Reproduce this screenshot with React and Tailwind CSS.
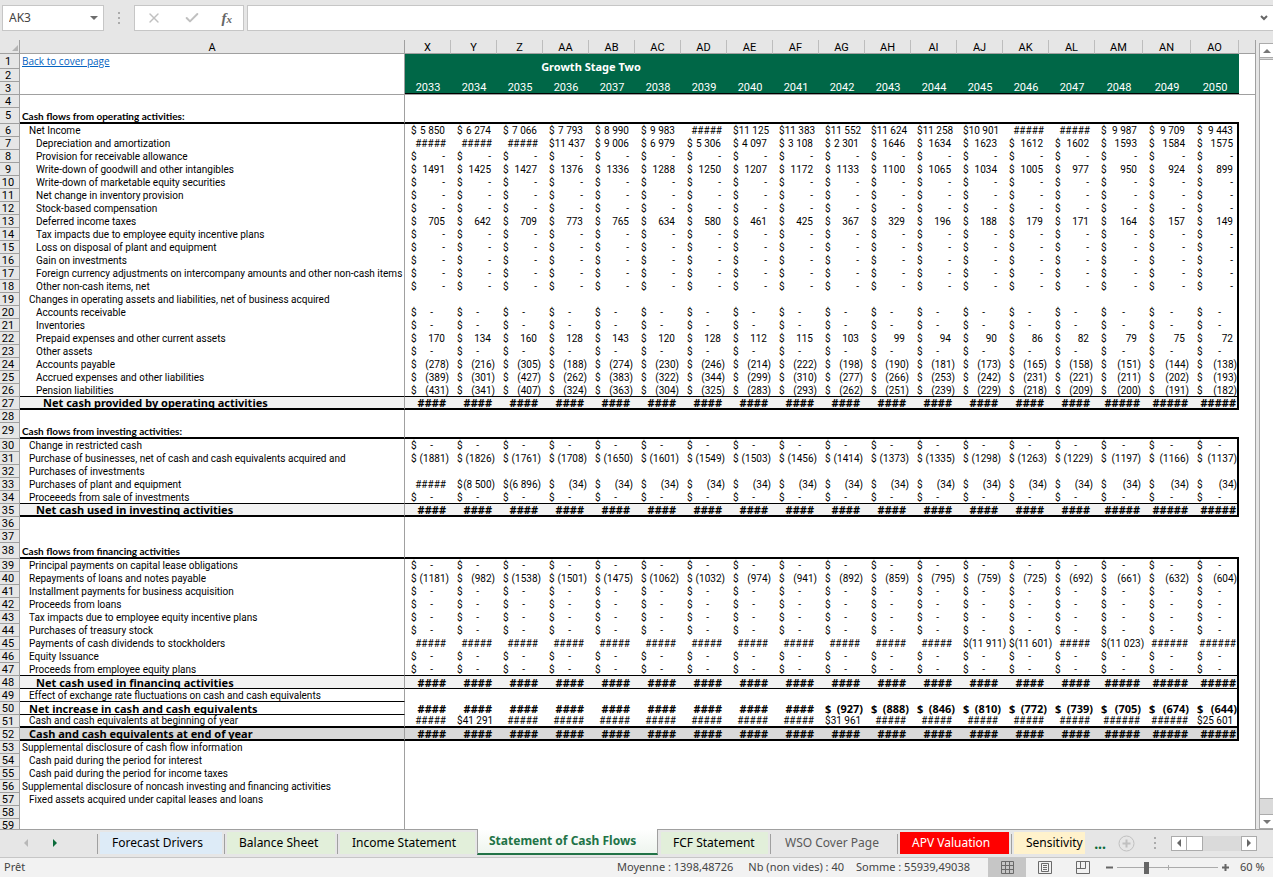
import React from 'react';
import { Check, X } from 'lucide-react';
import { clsx } from 'clsx';

const COLUMNS = ['X', 'Y', 'Z', 'AA', 'AB', 'AC', 'AD', 'AE', 'AF', 'AG', 'AH', 'AI', 'AJ', 'AK', 'AL', 'AM', 'AN', 'AO'];
const FIRST_YEAR = 2033;
const FIRST_WIDE = COLUMNS.indexOf('AM');

// Cell shorthands: '-' is a zero at the right, '~' a zero set further left, '#' a number too wide for its column
const ZERO = Array(18).fill('-');
const ZERO_LEFT = Array(18).fill('~');
const HASHES = Array(18).fill('#');
const list = (s) => s.split(',');

const ROWS = [
    { n: 4 },
    { n: 5, kind: 'section', label: 'Cash flows from operating activities:' },
    { n: 6, level: 1, label: 'Net Income', framed: true, cells: list('5 850,6 274,7 066,7 793,8 990,9 983,#,11 125,11 383,11 552,11 624,11 258,10 901,#,#,9 987,9 709,9 443') },
    { n: 7, level: 2, label: 'Depreciation and amortization', framed: true, cells: list('#,#,#,11 437,9 006,6 979,5 306,4 097,3 108,2 301,1646,1634,1623,1612,1602,1593,1584,1575') },
    { n: 8, level: 2, label: 'Provision for receivable allowance', framed: true, cells: ZERO },
    { n: 9, level: 2, label: 'Write-down of goodwill and other intangibles', framed: true, cells: list('1491,1425,1427,1376,1336,1288,1250,1207,1172,1133,1100,1065,1034,1005,977,950,924,899') },
    { n: 10, level: 2, label: 'Write-down of marketable equity securities', framed: true, cells: ZERO },
    { n: 11, level: 2, label: 'Net change in inventory provision', framed: true, cells: ZERO },
    { n: 12, level: 2, label: 'Stock-based compensation', framed: true, cells: ZERO },
    { n: 13, level: 2, label: 'Deferred income taxes', framed: true, cells: list('705,642,709,773,765,634,580,461,425,367,329,196,188,179,171,164,157,149') },
    { n: 14, level: 2, label: 'Tax impacts due to employee equity incentive plans', framed: true, cells: ZERO },
    { n: 15, level: 2, label: 'Loss on disposal of plant and equipment', framed: true, cells: ZERO },
    { n: 16, level: 2, label: 'Gain on investments', framed: true, cells: ZERO },
    { n: 17, level: 2, label: 'Foreign currency adjustments on intercompany amounts and other non-cash items', framed: true, cells: ZERO },
    { n: 18, level: 2, label: 'Other non-cash items, net', framed: true, cells: ZERO },
    { n: 19, level: 1, label: 'Changes in operating assets and liabilities, net of business acquired', framed: true },
    { n: 20, level: 2, label: 'Accounts receivable', framed: true, cells: ZERO_LEFT },
    { n: 21, level: 2, label: 'Inventories', framed: true, cells: ZERO_LEFT },
    { n: 22, level: 2, label: 'Prepaid expenses and other current assets', framed: true, cells: list('170,134,160,128,143,120,128,112,115,103,99,94,90,86,82,79,75,72') },
    { n: 23, level: 2, label: 'Other assets', framed: true, cells: ZERO_LEFT },
    { n: 24, level: 2, label: 'Accounts payable', framed: true, cells: list('(278),(216),(305),(188),(274),(230),(246),(214),(222),(198),(190),(181),(173),(165),(158),(151),(144),(138)') },
    { n: 25, level: 2, label: 'Accrued expenses and other liabilities', framed: true, cells: list('(389),(301),(427),(262),(383),(322),(344),(299),(310),(277),(266),(253),(242),(231),(221),(211),(202),(193)') },
    { n: 26, level: 2, label: 'Pension liabilities', framed: true, line: 'thin', cells: list('(431),(341),(407),(324),(363),(304),(325),(283),(293),(262),(251),(239),(229),(218),(209),(200),(191),(182)') },
    { n: 27, level: 3, kind: 'total', label: 'Net cash provided by operating activities', framed: true, line: 'thick', cells: HASHES },
    { n: 28 },
    { n: 29, kind: 'section', label: 'Cash flows from investing activities:' },
    { n: 30, level: 1, label: 'Change in restricted cash', framed: true, cells: ZERO_LEFT },
    { n: 31, level: 1, label: 'Purchase of businesses, net of cash and cash equivalents acquired and', framed: true, cells: list('(1881),(1826),(1761),(1708),(1650),(1601),(1549),(1503),(1456),(1414),(1373),(1335),(1298),(1263),(1229),(1197),(1166),(1137)') },
    { n: 32, level: 1, label: 'Purchases of investments', framed: true },
    { n: 33, level: 1, label: 'Purchases of plant and equipment', framed: true, cells: ['#', '(8 500)', '(6 896)', ...Array(15).fill('(34)')] },
    { n: 34, level: 1, label: 'Proceeeds from sale of investments', framed: true, line: 'thin', cells: ZERO_LEFT },
    { n: 35, level: 2, kind: 'total', label: 'Net cash used in investing activities', framed: true, line: 'thick', cells: HASHES },
    { n: 36 },
    { n: 37 },
    { n: 38, kind: 'section', label: 'Cash flows from financing activities' },
    { n: 39, level: 1, label: 'Principal payments on capital lease obligations', framed: true, cells: ZERO_LEFT },
    { n: 40, level: 1, label: 'Repayments of loans and notes payable', framed: true, cells: list('(1181),(982),(1538),(1501),(1475),(1062),(1032),(974),(941),(892),(859),(795),(759),(725),(692),(661),(632),(604)') },
    { n: 41, level: 1, label: 'Installment payments for business acquisition', framed: true, cells: ZERO_LEFT },
    { n: 42, level: 1, label: 'Proceeds from loans', framed: true, cells: ZERO_LEFT },
    { n: 43, level: 1, label: 'Tax impacts due to employee equity incentive plans', framed: true, cells: ZERO_LEFT },
    { n: 44, level: 1, label: 'Purchases of treasury stock', framed: true, cells: ZERO_LEFT },
    { n: 45, level: 1, label: 'Payments of cash dividends to stockholders', framed: true, cells: list('#,#,#,#,#,#,#,#,#,#,#,#,(11 911),(11 601),#,(11 023),#,#') },
    { n: 46, level: 1, label: 'Equity Issuance', framed: true, cells: ZERO_LEFT },
    { n: 47, level: 1, label: 'Proceeds from employee equity plans', framed: true, line: 'thin', cells: ZERO_LEFT },
    { n: 48, level: 2, kind: 'total', label: 'Net cash used in financing activities', framed: true, line: 'thin', cells: HASHES },
    { n: 49, level: 1, label: 'Effect of exchange rate fluctuations on cash and cash equivalents', framed: true, labelLine: true },
    { n: 50, level: 1, kind: 'bold', label: 'Net increase in cash and cash equivalents', framed: true, labelLine: true, cells: list('#,#,#,#,#,#,#,#,#,(927),(888),(846),(810),(772),(739),(705),(674),(644)') },
    { n: 51, level: 1, label: 'Cash and cash equivalents at beginning of year', framed: true, line: 'thick', cells: list('#,41 291,#,#,#,#,#,#,#,31 961,#,#,#,#,#,#,#,25 601') },
    { n: 52, level: 1, kind: 'grand', label: 'Cash and cash equivalents at end of year', framed: true, line: 'thick', cells: HASHES },
    { n: 53, level: 0, label: 'Supplemental disclosure of cash flow information' },
    { n: 54, level: 1, label: 'Cash paid during the period for interest' },
    { n: 55, level: 1, label: 'Cash paid during the period for income taxes' },
    { n: 56, level: 0, label: 'Supplemental disclosure of noncash investing and financing activities' },
    { n: 57, level: 1, label: 'Fixed assets acquired under capital leases and loans' },
    { n: 58 },
    { n: 59 },
];

const INDENT = ['pl-[2px]', 'pl-[9px]', 'pl-[16px]', 'pl-[23px]'];
const LINES = { thin: 'border-b border-b-black', thick: 'border-b-2 border-b-black' };
const BOLD = "font-['Noto_Sans',sans-serif] font-bold text-[11px]";

const TABS = [
    { name: 'Forecast Drivers', width: 'w-[127px]', fill: 'bg-[#ddebf7]' },
    { name: 'Balance Sheet', width: 'w-[113px]', fill: 'bg-[#e2efda]' },
    { name: 'Income Statement', width: 'w-[140px]', fill: 'bg-[#e2efda]' },
    { name: 'Statement of Cash Flows', width: 'w-[181px]', active: true },
    { name: 'FCF Statement', width: 'w-[112px]', fill: 'bg-[#e2efda]', noDivider: true },
    { name: 'WSO Cover Page', width: 'w-[127px]', text: 'text-[#595959]' },
    { name: 'APV Valuation', width: 'w-[114px]', fill: 'bg-[#ff0000]', text: 'text-white' },
    { name: 'Sensitivity', width: 'w-[76px]', fill: 'bg-[#fff2cc]' },
];

function Triangle({ points, className }) {
    return (
        <svg width="8" height="8" viewBox="0 0 8 8" className={className} aria-hidden="true">
            <polygon points={points} fill="currentColor" />
        </svg>
    );
}

function Dots() {
    return (
        <span className="flex flex-col gap-[3px]" aria-hidden="true">
            <i className="size-[2px] bg-[#ababab]" />
            <i className="size-[2px] bg-[#ababab]" />
            <i className="size-[2px] bg-[#ababab]" />
        </span>
    );
}

function FormulaBar() {
    return (
        <div className="flex h-10 shrink-0 items-start bg-[#e6e6e6] pt-[5px] pl-[2px]">
            <div className="flex h-[26px] w-[102px] items-center border border-[#c6c6c6] bg-white">
                <input
                    aria-label="Name box"
                    defaultValue="AK3"
                    className="w-20 bg-transparent pl-[6px] text-[12px] text-[#444] outline-none"
                />
                <button className="ml-auto pr-[5px] text-[#6d6d6d]" title="Name list">
                    <Triangle points="0,2 8,2 4,6" />
                </button>
            </div>
            <div className="flex h-[26px] w-[30px] items-center justify-center">
                <Dots />
            </div>
            <div className="flex h-[26px] w-[110px] items-center justify-around border border-[#c6c6c6] bg-white text-[#c0c0c0]">
                <button title="Cancel"><X size={16} strokeWidth={2} /></button>
                <button title="Enter"><Check size={16} strokeWidth={3} /></button>
                <button title="Insert function" className="font-['Liberation_Serif',serif] text-[15px] leading-none font-bold text-[#666] italic">
                    f<span className="text-[11px]">x</span>
                </button>
            </div>
            <div className="ml-[3px] flex h-[26px] flex-1 items-center border border-r-0 border-[#c6c6c6] bg-white">
                <input aria-label="Formula" className="min-w-0 flex-1 bg-transparent px-2 text-[12px] outline-none" />
                <button title="Expand formula bar" className="px-[5px] text-[#666]">
                    <svg width="8" height="6" viewBox="0 0 8 6" fill="none" stroke="currentColor" strokeWidth="2">
                        <path d="M1 1l3 3 3-3" />
                    </svg>
                </button>
            </div>
        </div>
    );
}

function RowNumber({ n }) {
    return (
        <th scope="row" className="border-r border-b border-[#a0a0a0] bg-[#e6e6e6] pr-[3px] text-center text-[11px] font-normal">
            {n}
        </th>
    );
}

function Amount({ value, bold, wide }) {
    if (value === '#') {
        const count = (bold ? 4 : 5) + (wide ? 1 : 0);
        return <div className={clsx('text-right', wide ? 'pr-[3px]' : 'pr-[5px]')}>{'#'.repeat(count)}</div>;
    }
    return (
        <div className={clsx('flex justify-between pl-[6px]', value.startsWith('(') ? 'pr-[2px]' : 'pr-[6px]')}>
            <span>$</span>
            <span className={clsx(value === '~' && 'pr-[12px]')}>{value === '~' ? '-' : value}</span>
        </div>
    );
}

function SheetRow({ row }) {
    const section = row.kind === 'section';
    const bold = row.kind === 'total' || row.kind === 'grand' || row.kind === 'bold';
    const line = section ? LINES.thick : LINES[row.line];
    const fill = row.kind === 'total' ? 'bg-[#f2f2f2]' : row.kind === 'grand' ? 'bg-[#d9d9d9]' : 'bg-white';

    return (
        <tr className={section ? 'h-[16px]' : 'h-[13px]'}>
            <RowNumber n={row.n} />
            <td
                className={clsx(
                    'overflow-hidden border-r border-r-[#a0a0a0] whitespace-nowrap',
                    INDENT[row.level ?? 0],
                    fill,
                    line,
                    row.labelLine && LINES.thin,
                    section && "align-bottom font-['Lato',sans-serif] font-bold",
                    bold && BOLD,
                )}
            >
                {row.label}
            </td>
            {COLUMNS.map((col, i) => (
                <td
                    key={col}
                    className={clsx(
                        'whitespace-nowrap',
                        fill,
                        line,
                        bold && BOLD,
                        row.framed && i === COLUMNS.length - 1 && 'border-r-2 border-r-black [&>div]:-mr-[2px]',
                    )}
                >
                    {row.cells && <Amount value={row.cells[i]} bold={bold} wide={i >= FIRST_WIDE} />}
                </td>
            ))}
            <td className="bg-white" />
        </tr>
    );
}

function Sheet() {
    return (
        <div className="min-w-0 flex-1 overflow-hidden bg-white">
            <table className="w-full table-fixed border-separate border-spacing-0 font-['Roboto',sans-serif] text-[10px] leading-[11px] text-black">
                <colgroup>
                    <col className="w-[20px]" />
                    <col className="w-[385px]" />
                    {COLUMNS.map((col, i) => (
                        <col key={col} className={i >= FIRST_WIDE ? 'w-[48px]' : 'w-[46px]'} />
                    ))}
                    <col />
                </colgroup>
                <thead>
                    <tr className="h-[14px] bg-[#e6e6e6] text-[11px] [&>th]:pt-[2px]">
                        <th className="border-r border-b border-[#a0a0a0] text-[#b4b4b4]">
                            <Triangle points="8,0 8,8 0,8" className="ml-auto h-[6px]" />
                        </th>
                        <th scope="col" className="border-r border-b border-[#a0a0a0] font-normal">A</th>
                        {COLUMNS.map((col) => (
                            <th key={col} scope="col" className="border-r border-b border-[#a0a0a0] border-r-[#bdbdbd] font-normal">{col}</th>
                        ))}
                        <th className="border-b border-[#a0a0a0]" />
                    </tr>
                </thead>
                <tbody>
                    <tr className="h-[15px]">
                        <RowNumber n={1} />
                        <td className="border-r border-[#a0a0a0] pl-[2px]">
                            <a href="#cover" className="font-['Open_Sans',sans-serif] text-[#0563c1] underline">Back to cover page</a>
                        </td>
                        <th colSpan={8} rowSpan={2} className={clsx('bg-[#006747] pb-[3px] pl-[4px] text-center text-white', BOLD)}>
                            Growth Stage Two
                        </th>
                        <td colSpan={10} rowSpan={2} className="bg-[#006747]" />
                        <td />
                    </tr>
                    <tr className="h-[13px]">
                        <RowNumber n={2} />
                        <td className="border-r border-[#a0a0a0]" />
                        <td />
                    </tr>
                    <tr className="h-[13px]">
                        <RowNumber n={3} />
                        <td className="border-r border-b border-[#a0a0a0]" />
                        {COLUMNS.map((col, i) => (
                            <td key={col} className="border-b border-b-[#a0a0a0] bg-[#006747] text-center text-[11px] text-white">
                                <div className="border-b border-black">{FIRST_YEAR + i}</div>
                            </td>
                        ))}
                        <td className="border-b border-[#a0a0a0]" />
                    </tr>
                    {ROWS.map((row) => <SheetRow key={row.n} row={row} />)}
                </tbody>
            </table>
        </div>
    );
}

function VerticalScroll() {
    return (
        <div className="flex w-[18px] shrink-0 border-l border-[#a0a0a0] bg-[#e6e6e6] pt-[3px] pl-[3px]">
            <div className="flex flex-1 flex-col border-l border-[#ababab] bg-[#dadada]">
                <button title="Scroll up" className="flex h-[15px] items-center justify-center border-y border-[#ababab] bg-white text-[#777]">
                    <Triangle points="0,6 8,6 4,2" />
                </button>
                <div className="mt-px flex-1 border-y border-[#ababab] bg-white" />
                <button title="Scroll down" className="mt-[15px] flex h-[15px] items-center justify-center border-y border-[#ababab] bg-white text-[#777]">
                    <Triangle points="0,2 8,2 4,6" />
                </button>
            </div>
        </div>
    );
}

function SheetTabs() {
    return (
        <div className="flex h-[28px] shrink-0 items-start border-t border-[#a0a0a0] bg-[#e6e6e6]">
            <div className="flex h-[26px] w-[97px] shrink-0 items-center pl-[22px]">
                <button title="Previous sheets" className="text-[#b8b8b8]"><Triangle points="6,0 6,8 2,4" /></button>
                <button title="Next sheets" className="ml-[21px] text-[#0b6b3a]"><Triangle points="2,0 2,8 6,4" /></button>
            </div>
            {TABS.map((tab) =>
                tab.active ? (
                    <button
                        key={tab.name}
                        className={clsx('-mt-px h-[26px] shrink-0 border-x border-b-2 border-x-[#a0a0a0] border-b-[#217346] bg-linear-to-b from-white to-[#eef5ee] pl-[11px] text-left text-[12px] font-bold whitespace-nowrap text-[#217346]', tab.width)}
                    >
                        {tab.name}
                    </button>
                ) : (
                    <div key={tab.name} className={clsx('flex h-[24px] shrink-0 items-end', tab.width)}>
                        <i className={clsx('h-[20px] w-px', tab.noDivider ? 'bg-transparent' : 'bg-[#a0a0a0]')} />
                        <button className={clsx('mx-[2px] h-[22px] flex-1 pl-[12px] text-left text-[12px] whitespace-nowrap', tab.fill, tab.text)}>
                            {tab.name}
                        </button>
                    </div>
                ),
            )}
            <div className="ml-auto flex h-[26px] shrink-0 items-center pr-[16px]">
                <button title="More sheets" className="text-[14px] font-bold text-[#0b6b3a]">...</button>
                <button title="New sheet" className="ml-[12px] text-[#c0c0c0]">
                    <svg width="17" height="17" viewBox="0 0 17 17" fill="none" stroke="currentColor">
                        <circle cx="8.5" cy="8.5" r="7.5" />
                        <path d="M8.5 4.5v8M4.5 8.5h8" strokeWidth="2" />
                    </svg>
                </button>
                <span className="mr-[15px] ml-[19px]"><Dots /></span>
                <div className="flex h-[15px] w-[86px] bg-[#dadada]">
                    <button title="Scroll left" className="flex w-[16px] items-center justify-center border border-[#ababab] bg-white text-[#666]">
                        <Triangle points="6,0 6,8 2,4" />
                    </button>
                    <div className="w-[16px] border border-l-0 border-[#ababab] bg-white" />
                    <button title="Scroll right" className="ml-auto flex w-[16px] items-center justify-center border border-[#ababab] bg-white text-[#666]">
                        <Triangle points="2,0 2,8 6,4" />
                    </button>
                </div>
            </div>
        </div>
    );
}

function StatusBar() {
    return (
        <div className="flex h-5 shrink-0 items-center border-t border-[#c6c6c6] bg-[#f2f2f2] pl-1 text-[11px] whitespace-nowrap text-[#444]">
            <span>Prêt</span>
            <span className="ml-auto">Moyenne : 1398,48726</span>
            <span className="ml-[15px]">Nb (non vides) : 40</span>
            <span className="ml-[12px]">Somme : 55939,49038</span>
            <div className="ml-[18px] flex h-full text-[#6a6a6a]">
                <button title="Normal" className="flex w-[38px] items-center justify-center bg-[#c6c6c6]">
                    <svg width="13" height="13" viewBox="0 0 13 13" fill="none" stroke="currentColor">
                        <path d="M.5.5h12v12H.5zM4.5.5v12M8.5.5v12M.5 4.5h12M.5 8.5h12" />
                    </svg>
                </button>
                <button title="Page layout" className="flex w-[38px] items-center justify-center">
                    <svg width="14" height="13" viewBox="0 0 14 13" fill="none" stroke="currentColor">
                        <path d="M.5.5h13v12H.5zM3.5 2.5h7v8h-7zM5 4.5h4M5 6.5h4M5 8.5h4" />
                    </svg>
                </button>
                <button title="Page break preview" className="flex w-[38px] items-center justify-center">
                    <svg width="14" height="13" viewBox="0 0 14 13" fill="none" stroke="currentColor">
                        <path d="M.5.5h13v12H.5zM4.5.5v7M9.5.5v7M.5 7.5h9" />
                    </svg>
                </button>
            </div>
            <button title="Zoom out" className="ml-[2px] p-[2px] text-[#666]">
                <svg width="7" height="7" viewBox="0 0 7 7" stroke="currentColor" strokeWidth="2"><path d="M0 3.5h7" /></svg>
            </button>
            <div className="relative mx-[2px] flex w-[101px] items-center">
                <i className="absolute left-1/2 h-[5px] w-px bg-[#ababab]" />
                <input
                    type="range"
                    aria-label="Zoom"
                    min="0"
                    max="100"
                    defaultValue="28"
                    className="relative h-[12px] w-full appearance-none bg-transparent bg-linear-to-r from-[#ababab] to-[#ababab] bg-[length:100%_1px] bg-center bg-no-repeat [&::-webkit-slider-thumb]:h-[12px] [&::-webkit-slider-thumb]:w-[5px] [&::-webkit-slider-thumb]:appearance-none [&::-webkit-slider-thumb]:bg-[#666]"
                />
            </div>
            <button title="Zoom in" className="p-[2px] text-[#666]">
                <svg width="7" height="7" viewBox="0 0 7 7" stroke="currentColor" strokeWidth="2"><path d="M0 3.5h7M3.5 0v7" /></svg>
            </button>
            <span className="w-[42px] pl-[9px]">60 %</span>
        </div>
    );
}

export default function App() {
    return (
        <div className="flex h-screen flex-col overflow-hidden bg-[#e6e6e6] font-['Noto_Sans',sans-serif] text-black">
            <FormulaBar />
            <div className="flex min-h-0 flex-1">
                <Sheet />
                <VerticalScroll />
            </div>
            <SheetTabs />
            <StatusBar />
        </div>
    );
}
